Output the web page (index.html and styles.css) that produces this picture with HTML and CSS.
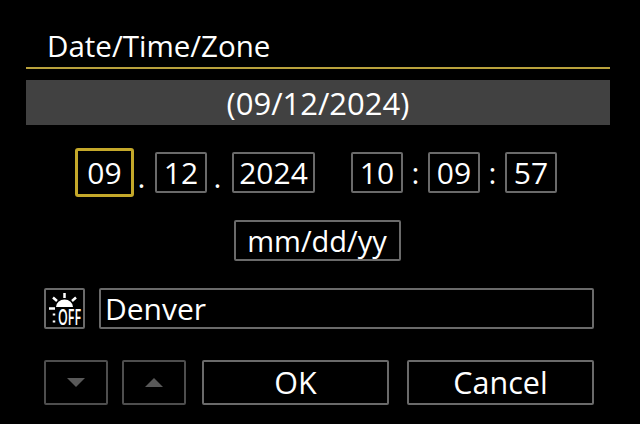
FILE: index.html
```html
<!DOCTYPE html>
<html lang="en">
<head>
  <meta charset="UTF-8">
  <title>Date/Time/Zone</title>
  <link rel="stylesheet" href="styles.css">
</head>
<body>
  <div class="screen">
    <div class="header">
      <h2>Date/Time/Zone</h2>
    </div>
    <div class="preview">(09/12/2024)</div>

    <!-- Date and time fields -->
    <div class="fields">
      <div class="field field-active">09</div>
      <span class="sep sep-dot sep-first">.</span>
      <div class="field field-2">12</div>
      <span class="sep sep-dot">.</span>
      <div class="field field-4">2024</div>
      <div class="field field-2 time-start">10</div>
      <span class="sep">:</span>
      <div class="field field-2">09</div>
      <span class="sep">:</span>
      <div class="field field-2">57</div>
    </div>

    <div class="format-row">
      <div class="field format">mm/dd/yy</div>
    </div>

    <!-- Daylight saving and zone -->
    <div class="zone-row">
      <div class="field dst">
        <svg width="37" height="37" viewBox="0 0 37 37">
          <path class="sun" d="M10 17a8.500 7.500 0 0 1 17 0z"/>
          <path class="ray" d="M18.500 3v5M7 7.500l4 3.500M30 7.500l-4 3.500M3 18.500h6"/>
          <path class="ray" d="M8 23.500v2M8 30.500v2"/>
          <text x="12" y="35" class="off" textLength="23" lengthAdjust="spacingAndGlyphs">OFF</text>
        </svg>
      </div>
      <div class="field zone">Denver</div>
    </div>

    <div class="button-row">
      <div class="btn btn-arrow"><span class="arrow-down"></span></div>
      <div class="btn btn-arrow"><span class="arrow-up"></span></div>
      <div class="btn btn-ok">OK</div>
      <div class="btn btn-cancel">Cancel</div>
    </div>
  </div>
</body>
</html>
```

FILE: styles.css
```css
html, body {
  margin: 0;
  padding: 0;
  background-color: #000;
}

.screen {
  width: 640px;
  height: 424px;
  overflow: hidden;
  box-sizing: border-box;
  padding: 0 30px 0 26px;
  color: #fff;
  font-family: "Open Sans", "Noto Sans", sans-serif;
}

.header {
  height: 69px;
  box-sizing: border-box;
  border-bottom: 2px solid #b9a23c;
}

.header h2 {
  margin: 0;
  padding: 27px 0 0 21px;
  font-size: 29.500px;
  line-height: 38px;
  font-weight: 400;
}

.preview {
  margin-top: 11px;
  height: 45px;
  line-height: 46px;
  background-color: #414141;
  text-align: center;
  font-size: 31px;
}

.fields {
  display: flex;
  align-items: center;
  height: 49px;
  margin-top: 23px;
  padding-left: 49px;
}

.field {
  box-sizing: border-box;
  border: 2px solid #6a6a6a;
  border-radius: 2px;
  height: 41px;
  line-height: 37px;
  font-size: 30px;
  text-align: center;
}

.field-active {
  width: 59px;
  height: 49px;
  line-height: 43px;
  border: 3px solid #c4a82a;
  border-radius: 3px;
}

.field-2 {
  width: 52px;
}

.field-4 {
  width: 83px;
}

.sep {
  width: 25px;
  text-align: center;
  font-size: 30px;
  line-height: 37px;
}

.sep-dot {
  width: 21px;
  padding-top: 8px;
}

.sep-first {
  box-sizing: border-box;
  padding-right: 6px;
}

.sep-dot + .field-4 {
  margin-left: 4px;
}

.time-start {
  margin-left: 36px;
}

.format-row {
  display: flex;
  justify-content: center;
  margin-top: 23px;
  padding-right: 2px;
}

.format {
  width: 167px;
  font-size: 29px;
}

.zone-row {
  display: flex;
  margin-top: 27px;
  margin-left: 18px;
}

.dst {
  width: 41px;
  flex-shrink: 0;
}

.dst svg {
  display: block;
  overflow: visible;
}

.sun {
  fill: #fff;
}

.ray {
  stroke: #fff;
  stroke-width: 2.500;
  fill: none;
}

.off {
  font-family: "Open Sans", sans-serif;
  font-size: 21px;
  font-weight: 600;
  fill: #fff;
}

.zone {
  width: 495px;
  margin-left: 14px;
  padding-left: 4px;
  text-align: left;
}

.button-row {
  display: flex;
  margin-top: 31px;
  margin-left: 18px;
}

.btn {
  box-sizing: border-box;
  height: 45px;
  border: 2px solid #6a6a6a;
  border-radius: 2px;
  line-height: 41px;
  font-size: 30.500px;
  text-align: center;
}

.btn-arrow {
  width: 64px;
  margin-right: 14px;
  border-color: #4e4e4e;
  display: flex;
  align-items: center;
  justify-content: center;
}

.btn-ok {
  width: 187px;
  margin-left: 2px;
}

.btn-cancel {
  width: 187px;
  margin-left: 18px;
}

.arrow-down,
.arrow-up {
  width: 0;
  height: 0;
  border-left: 9px solid transparent;
  border-right: 9px solid transparent;
}

.arrow-down {
  border-top: 9px solid #595959;
}

.arrow-up {
  border-bottom: 9px solid #595959;
}
```
